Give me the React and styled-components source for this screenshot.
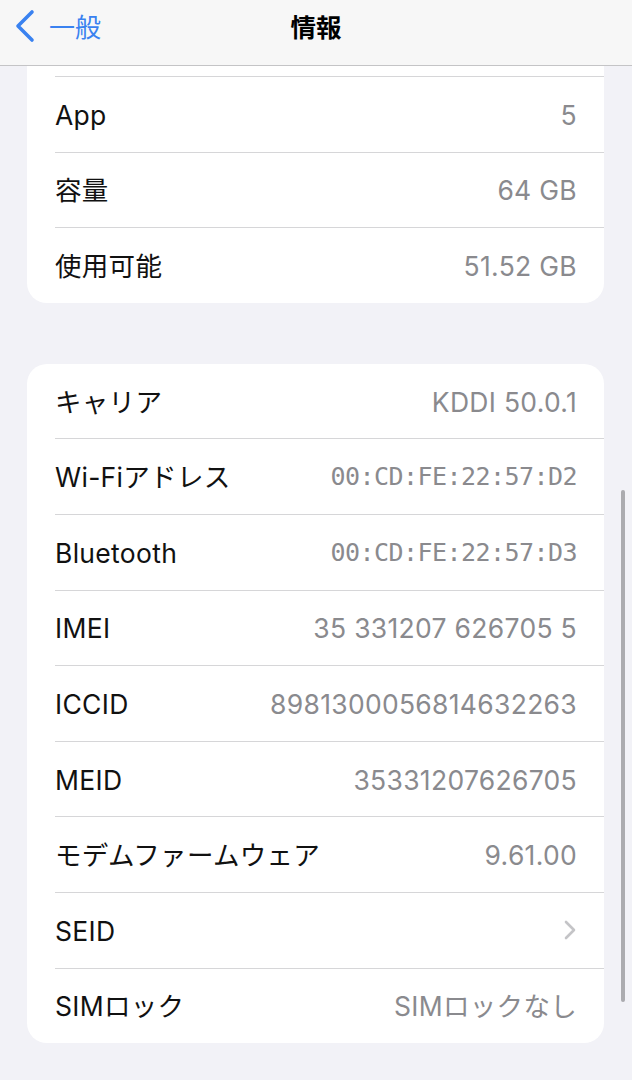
import React from "react";
import styled, { createGlobalStyle } from "styled-components";

const Global = createGlobalStyle`
  html, body { margin: 0; padding: 0; background: #f2f2f7; }
  body { font-family: Inter, "Noto Sans CJK JP", "Noto Sans", sans-serif; -webkit-font-smoothing: antialiased; }
`;

const Screen = styled.div`
  position: relative;
  width: 632px;
  height: 1080px;
  overflow: hidden;
  background: #f2f2f7;
  display: flex;
  flex-direction: column;
`;

const NavBar = styled.header`
  flex: 0 0 auto;
  box-sizing: border-box;
  height: 66px;
  padding-bottom: 14px;
  background: #f7f7f7;
  border-bottom: 1px solid #c4c4c6;
  display: grid;
  grid-template-columns: 1fr auto 1fr;
  align-items: center;
  position: relative;
  z-index: 2;
`;

const BackButton = styled.div`
  display: flex;
  align-items: center;
  gap: 12px;
  padding-left: 13px;
  color: #3a82f0;
  font-size: 26px;
  line-height: 34px;
  font-family: "Noto Sans CJK JP", sans-serif;
  font-weight: 400;
`;

const Title = styled.div`
  font-family: "Noto Sans CJK JP", sans-serif;
  font-size: 25.5px;
  line-height: 34px;
  font-weight: 700;
  color: #000;
`;

const Content = styled.main`
  flex: 1 1 auto;
  overflow: hidden;
  display: flex;
  flex-direction: column;
  gap: 61px;
  padding: 0 28px 0 27px;
`;

const Card = styled.section`
  background: #fff;
  border-radius: ${(p) => (p.$clippedTop ? "0 0 20px 20px" : "20px")};
  overflow: hidden;
`;

const Row = styled.div`
  padding-left: 28px;
`;

const ClippedRowTail = styled.div`
  height: 10px;
  border-bottom: 1px solid #d6d6d8;
`;

const RowInner = styled.div`
  height: 74.6px;
  display: flex;
  align-items: center;
  justify-content: space-between;
  padding-right: 27px;
  border-bottom: ${(p) => (p.$last ? "none" : "1px solid #d6d6d8")};
`;

const Label = styled.span`
  font-size: 26.5px;
  line-height: 34px;
  padding-top: 1px;
  color: #111;
  letter-spacing: 0.3px;
`;

const Value = styled.span`
  color: #8a8a8e;
  line-height: 34px;
  padding-top: 1px;
  letter-spacing: ${(p) => (p.$mono ? "-0.55px" : "0.3px")};
  font-family: ${(p) =>
    p.$mono
      ? '"DejaVu Sans Mono", monospace'
      : 'Inter, "Noto Sans CJK JP", sans-serif'};
  font-size: ${(p) => (p.$mono ? "25px" : "26.5px")};
`;

const ScrollIndicator = styled.div`
  position: absolute;
  right: 7px;
  top: 490px;
  width: 4px;
  height: 512px;
  border-radius: 2px;
  background: #ababaf;
  z-index: 3;
`;

const Chevron = () => (
  <svg width="14" height="22" viewBox="0 0 14 22" style={{ display: "block" }}>
    <polyline
      points="3,3 11,11 3,19"
      fill="none"
      stroke="#c4c4c7"
      strokeWidth="2.6"
      strokeLinecap="round"
      strokeLinejoin="round"
    />
  </svg>
);

const BackChevron = () => (
  <svg width="24" height="34" viewBox="0 0 24 34" style={{ display: "block" }}>
    <polyline
      points="19,3 5,17 19,31"
      fill="none"
      stroke="#3a82f0"
      strokeWidth="3.6"
      strokeLinecap="round"
      strokeLinejoin="round"
    />
  </svg>
);

const card1 = [
  ["App", "5"],
  ["容量", "64 GB"],
  ["使用可能", "51.52 GB"],
];

const card2 = [
  ["キャリア", "KDDI 50.0.1"],
  ["Wi-Fiアドレス", "00:CD:FE:22:57:D2", true],
  ["Bluetooth", "00:CD:FE:22:57:D3", true],
  ["IMEI", "35 331207 626705 5"],
  ["ICCID", "8981300056814632263"],
  ["MEID", "35331207626705"],
  ["モデムファームウェア", "9.61.00"],
  ["SEID", null],
  ["SIMロック", "SIMロックなし"],
];

function InfoRow({ label, value, mono, last }) {
  return (
    <Row>
      <RowInner $last={last}>
        <Label>{label}</Label>
        {value === null ? <Chevron /> : <Value $mono={mono}>{value}</Value>}
      </RowInner>
    </Row>
  );
}

export default function App() {
  return (
    <Screen>
      <Global />
      <NavBar>
        <BackButton>
          <BackChevron />
          <span>一般</span>
        </BackButton>
        <Title>情報</Title>
        <div />
      </NavBar>
      <Content>
        <Card $clippedTop>
          <Row>
            <ClippedRowTail />
          </Row>
          {card1.map(([l, v], i) => (
            <InfoRow key={l} label={l} value={v} last={i === card1.length - 1} />
          ))}
        </Card>
        <Card>
          {card2.map(([l, v, m], i) => (
            <InfoRow key={l} label={l} value={v} mono={m} last={i === card2.length - 1} />
          ))}
        </Card>
      </Content>
      <ScrollIndicator />
    </Screen>
  );
}
